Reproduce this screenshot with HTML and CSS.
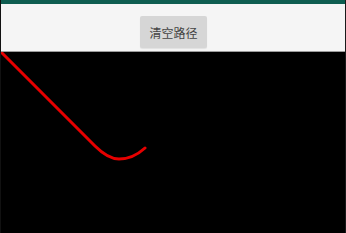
FILE: index.html
```html
<!DOCTYPE html>
<html>
<head>
<meta charset="utf-8">
<link rel="stylesheet" href="styles.css">
</head>
<body>
<div class="screen">
  <div class="status"></div>
  <div class="toolbar">
    <button class="clear-btn">清空路径</button>
  </div>
  <div class="canvas">
    <svg class="drawing" width="344" height="181" viewBox="0 0 344 181">
      <path d="M1 1 L94 94 Q107 107 118 107 Q132 107 144 96" fill="none" stroke="#e60000" stroke-width="3" stroke-linecap="round" stroke-linejoin="round"/>
    </svg>
  </div>
</div>
</body>
</html>
```
FILE: styles.css
```css
html, body {
  margin: 0;
  padding: 0;
  background: #000;
  width: 346px;
  height: 233px;
  overflow: hidden;
}
.screen {
  width: 346px;
  height: 233px;
  display: flex;
  flex-direction: column;
  box-sizing: border-box;
  border-left: 1px solid #111;
  border-right: 1px solid #1a1a1a;
  font-family: "Noto Sans CJK SC", "Noto Sans", sans-serif;
}
.status {
  height: 4px;
  background: #0e5d50;
  flex: none;
}
.toolbar {
  height: 48px;
  flex: none;
  background: #f5f5f5;
  border-bottom: 1px solid #9c9c9c;
  display: flex;
  justify-content: center;
  align-items: flex-start;
  padding-top: 12px;
  box-sizing: border-box;
}
.clear-btn {
  width: 67px;
  height: 32px;
  margin-left: 1px;
  background: #d6d6d6;
  border: none;
  border-radius: 2px;
  font-family: "Noto Sans CJK SC", sans-serif;
  font-size: 12px;
  color: #444;
  padding: 0;
  box-shadow: 0 1px 1px rgba(0,0,0,0.08);
}
.canvas {
  flex: 1;
  background: #000;
}
.drawing {
  display: block;
}
```
